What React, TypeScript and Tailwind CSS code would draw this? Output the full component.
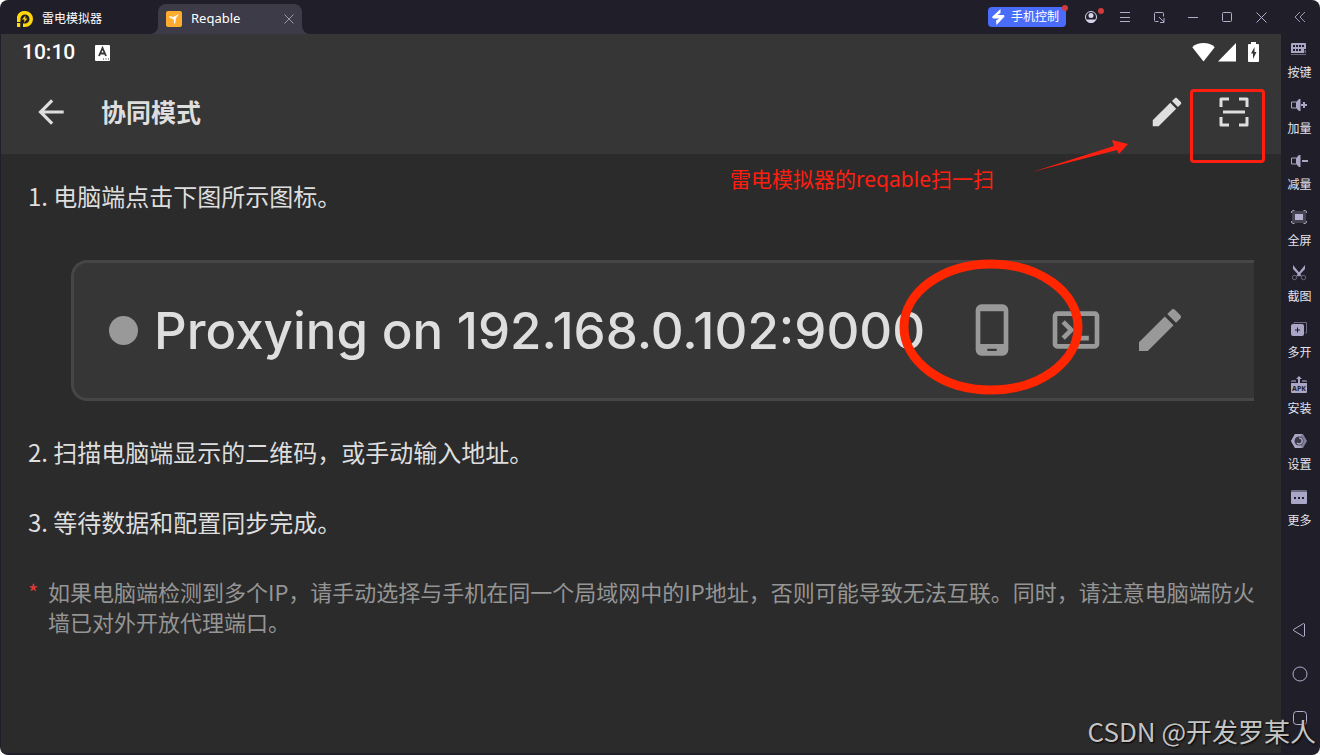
import React from 'react';

interface SideTool {
  label: string;
  icon: React.ReactNode;
}

const PENCIL =
  'M3 17.25V21h3.75L17.81 9.94l-3.75-3.75L3 17.25zM20.71 7.04c.39-.39.39-1.02 0-1.41l-2.34-2.34c-.39-.39-1.02-.39-1.41 0l-1.83 1.83 3.75 3.75 1.83-1.83z';

const sideTools: SideTool[] = [
  {
    label: '按键',
    icon: (
      <>
        <path d="M2 2h12a1 1 0 0 1 1 1v5h-2v4H0V3a1 1 0 0 1 1-1z" fill="#a9a6c6" />
        <path d="M13.500 9h1.500v3h-1.500zM0 13h15v1H0z" fill="#6d6b80" />
        <path d="M2 4h2v2H2zM5 4h2v2H5zM8 4h2v2H8zM11 4h2v2h-2zM2 8h2v2H2zM5 8h2v2H5zM8 8h2v2H8z" fill="#1f1e29" />
      </>
    ),
  },
  {
    label: '加量',
    icon: (
      <>
        <path d="M5 5H.500v6H5" fill="none" stroke="#a9a6c6" />
        <path d="M5 5l3-3h1.500v12H8l-3-3zM14 5v2h2v2h-2v2h-2V9h-2V7h2V5z" fill="#a9a6c6" />
      </>
    ),
  },
  {
    label: '减量',
    icon: (
      <>
        <path d="M5 5H.500v6H5" fill="none" stroke="#a9a6c6" />
        <path d="M5 5l3-3h1.500v12H8l-3-3zM11 7h6v2h-6z" fill="#a9a6c6" />
      </>
    ),
  },
  {
    label: '全屏',
    icon: (
      <>
        <rect x="1" y="2" width="14" height="12" fill="#45434f" />
        <path d="M4 5h8v6H4z" fill="#b4b1d0" />
        <path d="M3.500 1.500H2l-1.500 1V4M12.500 1.500H14l1.500 1V4M3.500 14.500H2l-1.500-1V12M12.500 14.500H14l1.500-1V12" fill="none" stroke="#a9a6c6" />
      </>
    ),
  },
  {
    label: '截图',
    icon: (
      <>
        <path d="M2 0l8.500 10.500-1.500 1L2 4zM14 0v4L7 11.500l-1.500-1z" fill="#a9a6c6" />
        <circle cx="3.500" cy="12.500" r="2.200" fill="none" stroke="#6d6b80" />
        <circle cx="12.500" cy="12.500" r="2.200" fill="none" stroke="#6d6b80" />
      </>
    ),
  },
  {
    label: '多开',
    icon: (
      <>
        <path d="M3 2.500V1.500h12.500v10.500H14" fill="none" stroke="#6d6b80" />
        <rect x="0" y="3" width="13" height="12" rx="2" fill="#a9a6c6" />
        <path d="M6.500 6.500v5M4 9h5" stroke="#1f1e29" />
      </>
    ),
  },
  {
    label: '安装',
    icon: (
      <>
        <path d="M8 -1l3 3H9v4H7V2H5z" fill="#a9a6c6" />
        <path d="M0 5V4l1-1h4v2zM16 5V4l-1-1h-4v2z" fill="#6d6b80" />
        <path d="M0 6h16v9a1 1 0 0 1-1 1H1a1 1 0 0 1-1-1z" fill="#a9a6c6" />
        <text x="8" y="14" textAnchor="middle" fontSize="7" fontWeight="700" fill="#1f1e29">APK</text>
      </>
    ),
  },
  {
    label: '设置',
    icon: (
      <>
        <path d="M4 1h7l-2 3v8l2 3H4L0 8z" fill="#a9a6c6" />
        <path d="M4 1h8l4 7-4 7H4L0 8z" fill="#a9a6c6" fillOpacity="0.700" />
        <circle cx="8" cy="8" r="4.500" fill="#3a3846" />
        <path d="M8 5a3 3 0 1 1-2 5" fill="none" stroke="#a9a6c6" strokeWidth="1.500" />
      </>
    ),
  },
  {
    label: '更多',
    icon: (
      <>
        <path d="M1 1h14a1 1 0 0 1 1 1v1H0V2a1 1 0 0 1 1-1z" fill="#6d6b80" />
        <path d="M0 3h16v11a1 1 0 0 1-1 1H1a1 1 0 0 1-1-1z" fill="#a9a6c6" />
        <path d="M3 8h2v2H3zM7 8h2v2H7zM11 8h2v2h-2z" fill="#1f1e29" />
      </>
    ),
  },
];

const windowButtons: SideTool[] = [
  { label: '菜单', icon: <path d="M3 3.500h10M3 8.500h10M3 12.500h10" /> },
  { label: '小窗', icon: <path d="M7.500 12.500H4.500a1 1 0 0 1-1-1v-7a1 1 0 0 1 1-1h7a1 1 0 0 1 1 1v3M8 8l5 5M13 9v4.500H9" /> },
  { label: '最小化', icon: <path d="M3 8.500h10" /> },
  { label: '最大化', icon: <rect x="3.500" y="3.500" width="9" height="9" rx="1" /> },
  { label: '关闭', icon: <path d="M3.500 3.500l10 10M13.500 3.500l-10 10" /> },
];

const TitleBar: React.FC = () => (
  <header className="flex h-[34px] items-center">
    <div className="flex items-center gap-2 pt-1 pl-4">
      <svg width="18" height="18" viewBox="0 0 18 18">
        <path d="M1 6.500A8 8 0 0 1 9 1a8 8 0 0 1 0 16H7v-3.500h2A4.500 4.500 0 0 0 9 4.500 4.500 4.500 0 0 0 4.500 9v8H1z" fill="#ffd80a" />
        <path d="M9.500 5.500L6 9.500h2.500L8 12.500l3.500-4H9.200z" fill="#ffd80a" />
        <path d="M1 12.500h4M5 11.500v5.500" stroke="#1f1e29" />
      </svg>
      <span className="text-[12px] text-white">雷电模拟器</span>
    </div>
    <div className="relative ml-14 mt-1 flex h-[30px] w-[144px] items-center rounded-t-lg bg-[#3c3b47] pl-2">
      <svg className="absolute bottom-0 -left-2" width="8" height="8" viewBox="0 0 8 8">
        <path d="M8 0v8H0a8 8 0 0 0 8-8z" fill="#3c3b47" />
      </svg>
      <svg className="absolute bottom-0 -right-2" width="8" height="8" viewBox="0 0 8 8">
        <path d="M0 0v8h8a8 8 0 0 1-8-8z" fill="#3c3b47" />
      </svg>
      <svg width="16" height="16" viewBox="0 0 16 16">
        <rect width="16" height="16" rx="2" fill="#ffac2f" />
        <path d="M3 5l4 1 6-3-3 4-1 6-1-1V9L6 7.500 4 7z" fill="#fff" />
      </svg>
      <span className="ml-[9px] text-[13px] text-white">Reqable</span>
      <button type="button" aria-label="关闭标签" className="ml-auto mr-2">
        <svg width="10" height="10" viewBox="0 0 10 10" fill="none" stroke="#9a98a8">
          <path d="M.500 .500l9 9M9.500 .500l-9 9" />
        </svg>
      </button>
    </div>
    <div className="ml-auto flex items-center">
      <button type="button" className="relative mr-2 flex h-5 w-[78px] items-center gap-[6px] rounded bg-[#4a6cfb] pl-1 text-[12px] text-white">
        <svg width="13" height="16" viewBox="0 0 13 16" fill="#fff">
          <path d="M8.500 0v4L5.500 6H12l.500 1.500L4.500 16l-.500-4.500L7.500 9.500H1L0 8z" />
        </svg>
        手机控制
        <span className="absolute -top-[2px] -right-[2px] h-[6px] w-[6px] rounded-full bg-[#d33a3a]" />
      </button>
      <button type="button" aria-label="账号" className="relative flex h-[34px] w-[34px] items-center justify-center">
        <svg width="14" height="14" viewBox="0 0 14 14">
          <circle cx="7" cy="7" r="5.500" fill="none" stroke="#d6d4ec" />
          <circle cx="7" cy="5.500" r="2.500" fill="#d6d4ec" />
          <path d="M2 9.500h10A6 6 0 0 1 7 13a6 6 0 0 1-5-3.500z" fill="#d6d4ec" />
        </svg>
        <span className="absolute top-2 right-1 h-[6px] w-[6px] rounded-full bg-[#d33a3a]" />
      </button>
      {windowButtons.map((item) => (
        <button key={item.label} type="button" aria-label={item.label} className="flex h-[34px] w-[34px] items-center justify-center">
          <svg width="16" height="16" viewBox="0 0 16 16" fill="none" stroke="#b0aecb">
            {item.icon}
          </svg>
        </button>
      ))}
      <button type="button" aria-label="收起" className="flex h-[34px] w-[42px] items-center justify-center">
        <svg width="12" height="12" viewBox="0 0 12 12" fill="none" stroke="#9a98b2">
          <path d="M7 1L2 6l5 5M12 1L7 6l5 5" />
        </svg>
      </button>
    </div>
  </header>
);

const StatusBar: React.FC = () => (
  <div className="flex h-9 items-center pt-[2px] pl-[21px] pr-[22px] text-white">
    <span className="font-[Roboto] text-[21px] font-medium">10:10</span>
    <svg className="ml-5" width="16" height="16" viewBox="0 0 16 16">
      <rect width="15" height="16" rx="1" fill="#fff" />
      <path d="M4 11l3.500-8 3.500 8M5.200 8.500h4.600" fill="none" stroke="#363636" strokeWidth="1.800" />
      <path d="M8 14h1M10.500 14h1M13 14h1" stroke="#363636" />
    </svg>
    <svg className="mb-[2px] ml-auto" width="23" height="20" viewBox="0 0 23 20" fill="#fff">
      <path d="M11.500 19.500L.300 5.200C3 2.300 7 1 11.500 1s8.500 1.300 11.200 4.200z" />
    </svg>
    <svg className="mb-[2px] ml-[3px]" width="18" height="20" viewBox="0 0 18 20" fill="#fff">
      <path d="M18 1v18.500H0z" />
    </svg>
    <svg className="mb-[2px] ml-3" width="11" height="20" viewBox="0 0 11 20">
      <path d="M3 0h5v2h2a1 1 0 0 1 1 1v16a1 1 0 0 1-1 1H1a1 1 0 0 1-1-1V3a1 1 0 0 1 1-1h2z" fill="#fff" />
      <path d="M6.500 5L3 11.500h2V17l3.500-7h-2z" fill="#363636" />
    </svg>
  </div>
);

const AppToolbar: React.FC = () => (
  <div className="flex h-[84px] items-center pl-[31px] pr-7">
    <button type="button" aria-label="返回">
      <svg width="38" height="38" viewBox="0 0 24 24" fill="#dedede">
        <path d="M20 11H7.830l5.590-5.590L12 4l-8 8 8 8 1.410-1.410L7.830 13H20v-2z" />
      </svg>
    </button>
    <h1 className="ml-[31px] text-[25px] font-bold leading-9 text-[#dedede]">协同模式</h1>
    <button type="button" aria-label="编辑" className="ml-auto">
      <svg width="38" height="38" viewBox="0 0 24 24" fill="#dedede">
        <path d={PENCIL} />
      </svg>
    </button>
    <button type="button" aria-label="扫一扫" className="relative ml-[29px]">
      <svg width="38" height="38" viewBox="0 0 38 38" fill="none" stroke="#dedede" strokeWidth="3">
        <path d="M6 14V6h8M24 6h8v8M6 24v8h8M24 32h8v-8" strokeLinejoin="round" />
        <path d="M8 19h22" />
      </svg>
      <span className="absolute -top-1 -left-[25px] h-[74px] w-[75px] rounded border-[3px] border-[#fe1f11]" />
    </button>
    {/* hand-drawn hint pointing at the scan button */}
    <div className="absolute top-[104px] right-[153px] z-10 flex items-start text-[#fe1f11]">
      <span className="mt-[26px] mr-[38px] text-[21px] leading-[30px]">雷电模拟器的reqable扫一扫</span>
      <svg width="96" height="36" viewBox="0 0 96 36" fill="currentColor">
        <path d="M0 34L82 8l-2-6 16 4-9 10-2-4z" />
      </svg>
    </div>
  </div>
);

const ProxyBanner: React.FC = () => (
  <div className="mt-[46px] ml-[46px] mr-[3px] flex h-[141px] items-center rounded-l-2xl border-[3px] border-r-0 border-[#464646] bg-[#363636] pl-[35px] pr-[66px]">
    <span className="h-[29px] w-[29px] shrink-0 rounded-full bg-[#999]" />
    <span className="ml-4 whitespace-nowrap font-[Inter] text-[51px] font-medium leading-none text-[#dedede]">
      Proxying on 192.168.0.102:9000
    </span>
    <div className="ml-auto flex shrink-0 items-center gap-7 pb-[2px]">
      <div className="relative">
        <svg width="56" height="56" viewBox="0 0 24 24" fill="#999">
          <path d="M16.500 1h-9A2.500 2.500 0 0 0 5 3.500v17A2.500 2.500 0 0 0 7.500 23h9a2.500 2.500 0 0 0 2.500-2.500v-17A2.500 2.500 0 0 0 16.500 1zM14 21h-4v-1h4v1zm3-3H7V4h10v14z" />
        </svg>
        <svg className="absolute -top-11 -left-[65px] z-10 max-w-none" width="184" height="138" viewBox="0 0 184 138">
          <ellipse cx="92" cy="69" rx="87" ry="63" fill="none" stroke="#ff2600" strokeWidth="9" />
        </svg>
      </div>
      <svg width="56" height="56" viewBox="0 0 24 24" fill="#999">
        <path d="M20 4H4a2 2 0 0 0-2 2v12a2 2 0 0 0 2 2h16a2 2 0 0 0 2-2V6a2 2 0 0 0-2-2zm0 14H4V6h16v12z" />
        <path d="M6.500 8.500L10 12l-3.500 3.500M12 15.500h5.500" fill="none" stroke="#999" strokeWidth="2" />
      </svg>
      <svg width="56" height="56" viewBox="0 0 24 24" fill="#999">
        <path d={PENCIL} />
      </svg>
    </div>
  </div>
);

const SideBar: React.FC = () => (
  <aside className="flex w-[39px] shrink-0 flex-col items-center justify-between pt-[7px] pr-[2px] pb-[15px]">
    <div className="flex flex-col">
      {sideTools.map((tool) => (
        <button key={tool.label} type="button" className="flex h-14 flex-col items-center gap-[7px] text-[12px] leading-[18px] text-[#e4e3ec]">
          <svg width="16" height="16" viewBox="0 0 16 16" className="overflow-visible">
            {tool.icon}
          </svg>
          {tool.label}
        </button>
      ))}
    </div>
    <div className="flex flex-col">
      <button type="button" aria-label="后退" className="flex h-11 items-center">
        <svg width="16" height="16" viewBox="0 0 16 16" fill="none" stroke="#b0aecb">
          <path d="M12.500 2v12l-1 .500L1.500 8.500v-1L11.500 1.500z" />
        </svg>
      </button>
      <button type="button" aria-label="主页" className="flex h-11 items-center">
        <svg width="16" height="16" viewBox="0 0 16 16" fill="none" stroke="#b0aecb">
          <circle cx="8" cy="8" r="7" />
        </svg>
      </button>
      <button type="button" aria-label="最近任务" className="flex h-11 items-center">
        <svg width="16" height="16" viewBox="0 0 16 16" fill="none" stroke="#b0aecb">
          <rect x="1.500" y="1.500" width="13" height="13" rx="3" />
        </svg>
      </button>
    </div>
  </aside>
);

const App: React.FC = () => {
  return (
    <div className="relative flex min-h-screen flex-col overflow-hidden rounded-lg bg-[#1f1e29] font-['Noto_Sans','Noto_Sans_CJK_SC',sans-serif]">
      <TitleBar />
      <div className="flex flex-1">
        <main className="relative mb-[2px] ml-px flex-1 bg-[#2b2b2b] font-['Noto_Sans_CJK_SC',sans-serif]">
          <div className="bg-[#363636] font-['Noto_Sans','Noto_Sans_CJK_SC',sans-serif]">
            <StatusBar />
            <AppToolbar />
          </div>
          <div className="px-6 pt-6 pb-8 text-[24px] leading-9 text-[#dedede]">
            <p className="pl-[3px]">1. 电脑端点击下图所示图标。</p>
            <ProxyBanner />
            <p className="mt-[33px] pl-[3px]">2. 扫描电脑端显示的二维码，或手动输入地址。</p>
            <p className="mt-[34px] pl-[3px]">3. 等待数据和配置同步完成。</p>
            <div className="mt-9 flex text-[22px] leading-[30px] text-[#959595]">
              <span className="w-[23px] shrink-0 pl-[3px] text-[#e53935]">*</span>
              <p>
                如果电脑端检测到多个IP，请手动选择与手机在同一个局域网中的IP地址，否则可能导致无法互联。同时，请注意电脑端防火墙已对外开放代理端口。
              </p>
            </div>
          </div>
        </main>
        <SideBar />
      </div>
      <span className="absolute right-1 bottom-[6px] font-['Noto_Sans_CJK_SC',sans-serif] text-[26px] leading-9 text-[#c4c4c4] [text-shadow:1px_1px_2px_#000]">
        CSDN @开发罗某人
      </span>
    </div>
  );
};

export default App;
